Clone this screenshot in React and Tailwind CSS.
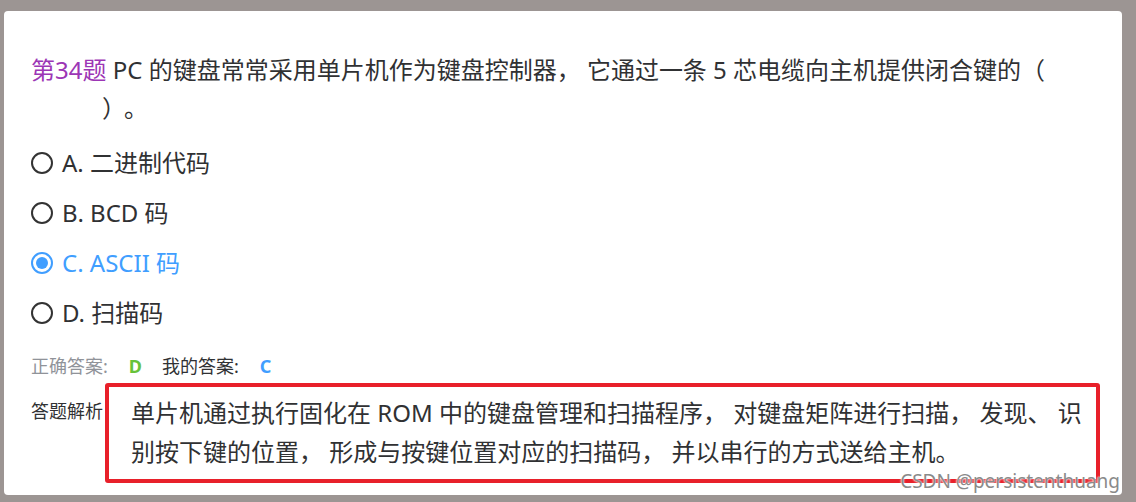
import React from 'react';

const font = { fontFamily: '"Noto Sans", "Noto Sans CJK SC", sans-serif' };

const options = [
  { key: 'A', text: '二进制代码' },
  { key: 'B', text: 'BCD 码' },
  { key: 'C', text: 'ASCII 码', checked: true },
  { key: 'D', text: '扫描码' },
];

const Radio = ({ checked }) => (
  <span
    className={`w-[22px] h-[22px] rounded-full border-2 flex items-center justify-center shrink-0 ${
      checked ? 'border-[#409eff]' : 'border-[#333]'
    }`}
  >
    {checked && <span className="w-[12px] h-[12px] rounded-full bg-[#409eff]" />}
  </span>
);

export default function App() {
  return (
    <div className="w-[1136px] h-[502px] bg-[#9c9593] pt-[11px] pl-[4px] overflow-hidden" style={font}>
      <div className="relative w-[1118px] h-[484px] bg-white rounded-[4px] pl-[27px] pt-[40px]">
        {/* question */}
        <p className="text-[24px] leading-[38px] text-[#303133] whitespace-nowrap">
          <span className="text-[#9c36b5]">第34题</span> PC 的键盘常常采用单片机作为键盘控制器， 它通过一条 5 芯电缆向主机提供闭合键的（
          <br />
          <span className="inline-block w-[71px]" />
          <span className="inline-block w-[22px]">）</span>。
        </p>

        {/* options */}
        <div className="mt-[11px] flex flex-col">
          {options.map(o => (
            <div
              key={o.key}
              className={`h-[50px] flex items-center gap-[9px] text-[24px] ${
                o.checked ? 'text-[#409eff]' : 'text-[#303133]'
              }`}
            >
              <Radio checked={o.checked} />
              <span>
                {o.key}. {o.text}
              </span>
            </div>
          ))}
        </div>

        {/* answers */}
        <div className="mt-[13px] h-[30px] flex items-center text-[18px]">
          <span className="text-[#909399]">正确答案:</span>
          <span className="ml-[21px] font-bold text-[#67c23a]">D</span>
          <span className="ml-[20px] text-[#303133]">我的答案:</span>
          <span className="ml-[21px] font-bold text-[#409eff]">C</span>
        </div>

        {/* analysis */}
        <div className="mt-[2px] flex items-start">
          <span className="w-[74px] shrink-0 pt-[14px] text-[18px] leading-[28px] text-[#303133]">答题解析</span>
          <div className="w-[995px] h-[100px] border-4 border-[#e8202a] rounded-[3px] pl-[22px] pt-[6px] text-[24px] leading-[39px] text-[#303133] whitespace-nowrap">
            单片机通过执行固化在 ROM 中的键盘管理和扫描程序， 对键盘矩阵进行扫描， 发现、 识
            <br />
            别按下键的位置， 形成与按键位置对应的扫描码， 并以串行的方式送给主机。
          </div>
        </div>

        {/* watermark */}
        <span
          className="absolute right-[2px] bottom-[1px] text-[19px] leading-[26px] text-[#8a8a8a]"
          style={{ textShadow: '0 0 2px #fff, 0 0 2px #fff' }}
        >
          CSDN @persistenthuang
        </span>
      </div>
    </div>
  );
}
